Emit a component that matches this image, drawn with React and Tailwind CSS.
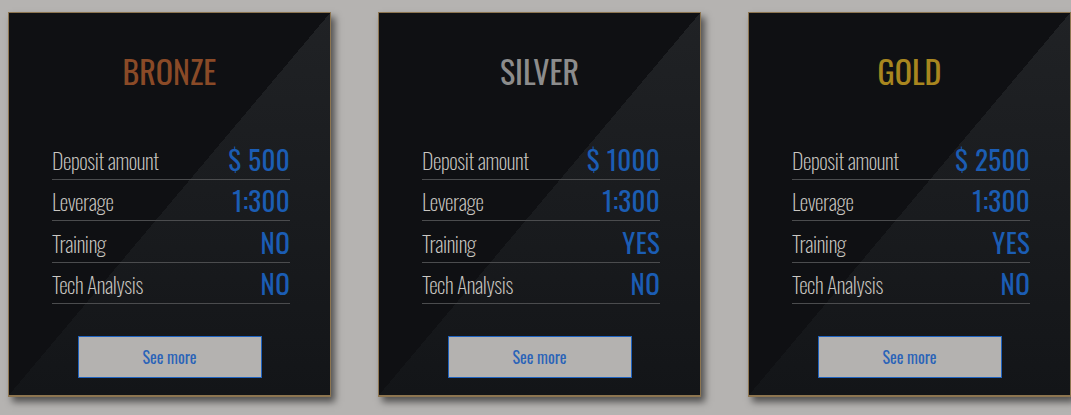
const PLANS = [
  {
    name: 'BRONZE',
    color: 'text-[#8a4a27]',
    rows: [
      ['Deposit amount', '$ 500'],
      ['Leverage', '1:300'],
      ['Training', 'NO'],
      ['Tech Analysis', 'NO'],
    ],
  },
  {
    name: 'SILVER',
    color: 'text-[#8c8c8c]',
    rows: [
      ['Deposit amount', '$ 1000'],
      ['Leverage', '1:300'],
      ['Training', 'YES'],
      ['Tech Analysis', 'NO'],
    ],
  },
  {
    name: 'GOLD',
    color: 'text-[#a8861f]',
    rows: [
      ['Deposit amount', '$ 2500'],
      ['Leverage', '1:300'],
      ['Training', 'YES'],
      ['Tech Analysis', 'NO'],
    ],
  },
]

const FONT = "font-['Oswald','Liberation_Sans_Narrow','DejaVu_Sans_Condensed',sans-serif]"

function PlanCard({ plan }) {
  return (
    <div className="w-[323px] h-[385px] shrink-0 border border-b-2 border-[#8d7550] bg-[linear-gradient(to_top_left,transparent_50%,#0f1013_50%),linear-gradient(to_bottom,#202225,#131518)] shadow-[4px_5px_7px_rgba(0,0,0,0.55)] flex flex-col items-center">
      <h2 className={`mt-[40px] text-[32px] leading-[36px] ${plan.color}`}>
        {plan.name}
      </h2>

      {/* rows */}
      <div className="mt-[49px] ml-[3px] w-[238px]">
        {plan.rows.map(([label, value]) => (
          <div key={label} className="h-[41.5px] border-b border-[#4b4c4e] flex items-end justify-between whitespace-nowrap">
            <span className="mb-[6px] text-[22px] leading-[26px] font-extralight tracking-[-0.4px] text-[#cac7c2]">{label}</span>
            <span className="mb-[4px] text-[27px] leading-[32px] tracking-[0.3px] text-[#1b5db4]">{value}</span>
          </div>
        ))}
      </div>

      <button className="mt-[32px] w-[184px] h-[42px] bg-[#b4b2b0] border border-[#1f63c0] text-[#2a63b8] text-[16px]">
        See more
      </button>
    </div>
  )
}

export default function App() {
  return (
    <div className={`w-[1071px] h-[415px] bg-[#b5b3b1] overflow-hidden pl-[8px] pt-[12px] flex gap-[47px] ${FONT}`}>
      {PLANS.map(p => <PlanCard key={p.name} plan={p} />)}
    </div>
  )
}
